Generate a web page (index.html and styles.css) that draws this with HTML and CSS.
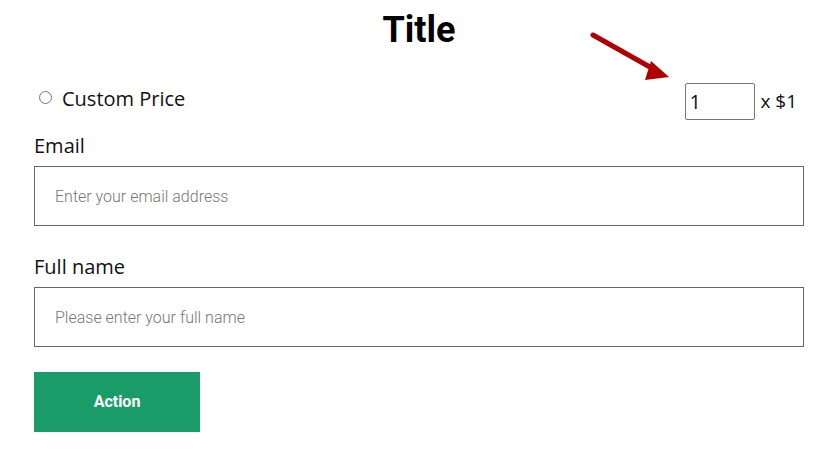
FILE: index.html
```html
<!DOCTYPE html>
<html lang="en">
<head>
  <meta charset="UTF-8" />
  <title>Title</title>
  <link rel="stylesheet" href="styles.css">
</head>
<body>
  <div class="container">
    <h1 class="title">Title</h1>

    <div class="price-row">
      <label class="radio-label">
        <input type="radio" name="price" class="radio" />
        Custom Price
      </label>
      <div class="qty">
        <svg class="arrow" width="90" height="56" viewBox="0 0 90 56">
          <path d="M4 4 L68 40" stroke="#b00000" stroke-width="5" stroke-linecap="round" />
          <polygon points="62,30 80,46 56,49" fill="#b00000" />
        </svg>
        <input type="text" class="qty-input" value="1" />
        <span class="qty-price">x $1</span>
      </div>
    </div>

    <form class="form" autocomplete="off">
      <label for="email" class="field-label">Email</label>
      <input type="email" id="email" class="field" placeholder="Enter your email address" />

      <label for="full_name" class="field-label">Full name</label>
      <input type="text" id="full_name" class="field" placeholder="Please enter your full name" />

      <button type="button" class="action">Action</button>
    </form>
  </div>
</body>
</html>
```

FILE: styles.css
```css
* {
  box-sizing: border-box;
}

body {
  margin: 0;
  background: #fff;
  font-family: 'Open Sans', sans-serif;
  color: #111;
}

.container {
  width: 770px;
  margin: 0 33px 0 34px;
}

.title {
  margin: 0;
  padding-top: 9px;
  font-family: Roboto, sans-serif;
  font-weight: 700;
  font-size: 36px;
  line-height: 42px;
  text-align: center;
  color: #000;
}

.price-row {
  display: flex;
  justify-content: space-between;
  align-items: center;
  margin-top: 32px;
  height: 37px;
}

.radio-label {
  display: flex;
  align-items: center;
  gap: 10px;
  font-size: 20px;
  margin-left: 5px;
  margin-bottom: 6px;
}

.radio {
  width: 13px;
  height: 13px;
  margin: 0 0 3px 0;
}

.qty {
  position: relative;
  display: flex;
  align-items: center;
  gap: 5px;
  margin-right: 7px;
}

.arrow {
  position: absolute;
  left: -96px;
  top: -52px;
}

.qty-input {
  width: 70px;
  height: 37px;
  border: 1px solid #767676;
  border-radius: 2px;
  padding: 0 3px;
  font-family: 'Open Sans', sans-serif;
  font-size: 20px;
  color: #111;
}

.qty-price {
  font-size: 19px;
  margin-bottom: 2px;
}

.form {
  display: flex;
  flex-direction: column;
  align-items: flex-start;
}

.field-label {
  font-size: 20px;
  line-height: 26px;
  margin-top: 13px;
  margin-bottom: 7px;
}

.field + .field-label {
  margin-top: 28px;
}

.field {
  width: 100%;
  height: 60px;
  border: 1px solid #666;
  padding: 0 20px;
  font-family: Roboto, sans-serif;
  font-size: 16px;
  font-weight: 300;
  color: #333;
}

.field::placeholder {
  color: #777;
}

.action {
  margin-top: 25px;
  width: 166px;
  height: 60px;
  border: none;
  background: #1a9c69;
  color: #fff;
  font-family: Roboto, sans-serif;
  font-weight: 700;
  font-size: 16px;
  line-height: 18px;
  padding: 0;
  cursor: pointer;
}
```
